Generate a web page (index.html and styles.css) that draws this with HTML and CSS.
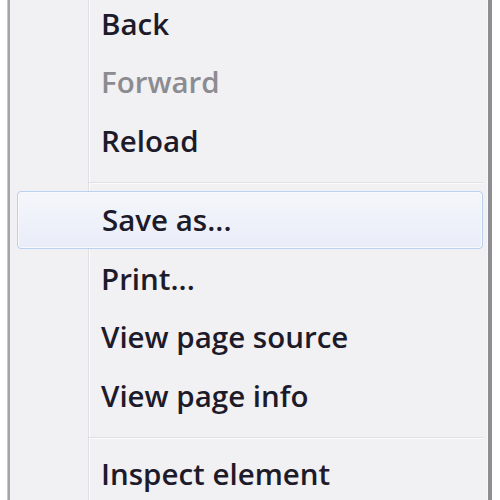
FILE: index.html
```html
<!DOCTYPE html>
<html>
<head>
<meta charset="utf-8">
<link rel="stylesheet" href="styles.css">
</head>
<body>
<div class="menu">
  <div class="item">Back</div>
  <div class="item disabled">Forward</div>
  <div class="item">Reload</div>
  <div class="sep sep-a"></div>
  <div class="item hover">Save as...</div>
  <div class="item">Print...</div>
  <div class="item">View page source</div>
  <div class="item">View page info</div>
  <div class="sep sep-b"></div>
  <div class="item">Inspect element</div>
</div>
</body>
</html>
```
FILE: styles.css
```css
html, body {
  margin: 0;
  padding: 0;
  background: #ffffff;
  width: 500px;
  height: 500px;
  overflow: hidden;
}
.menu {
  margin: -6px 0 0 7px;
  width: 480px;
  height: 520px;
  background: #f1f0f2;
  border-left: 1px solid #c8c8cc;
  box-shadow: inset 2px 0 0 #a3a3a8, inset -1px 0 0 #f7f7f8;
  border-right: 4px solid #8e8e92;
  position: relative;
  font-family: "Open Sans", "Noto Sans", sans-serif;
  font-size: 29.5px;
  font-weight: 600;
  color: #1d1b2a;
  display: flex;
  flex-direction: column;
}
.menu::before {
  content: "";
  position: absolute;
  left: 80px;
  top: 0;
  bottom: 0;
  width: 1px;
  background: #e0dfe3;
  box-shadow: 1px 0 0 #fbfbfc;
}
.item {
  height: 58.5px;
  display: flex;
  align-items: center;
  padding-left: 93px;
  box-sizing: border-box;
  flex: none;
  position: relative;
  line-height: 1;
}
.disabled {
  color: #8c8b90;
}
.hover {
  margin: 0 5px 0 9px;
  padding-left: 84px;
  border: 1px solid #b9d0ee;
  border-radius: 4px;
  background: linear-gradient(#f5f6fb, #e9edf8);
  box-shadow: inset 0 0 0 1px #f8f9fd;
}
.sep {
  height: 21px;
  flex: none;
  position: relative;
}
.sep::after {
  content: "";
  position: absolute;
  left: 81px;
  right: 5px;
  top: 12px;
  height: 1px;
  background: #e1dfe3;
  box-shadow: 0 1px 0 #fbfbfc;
}
.sep-b {
  height: 20px;
}
```
